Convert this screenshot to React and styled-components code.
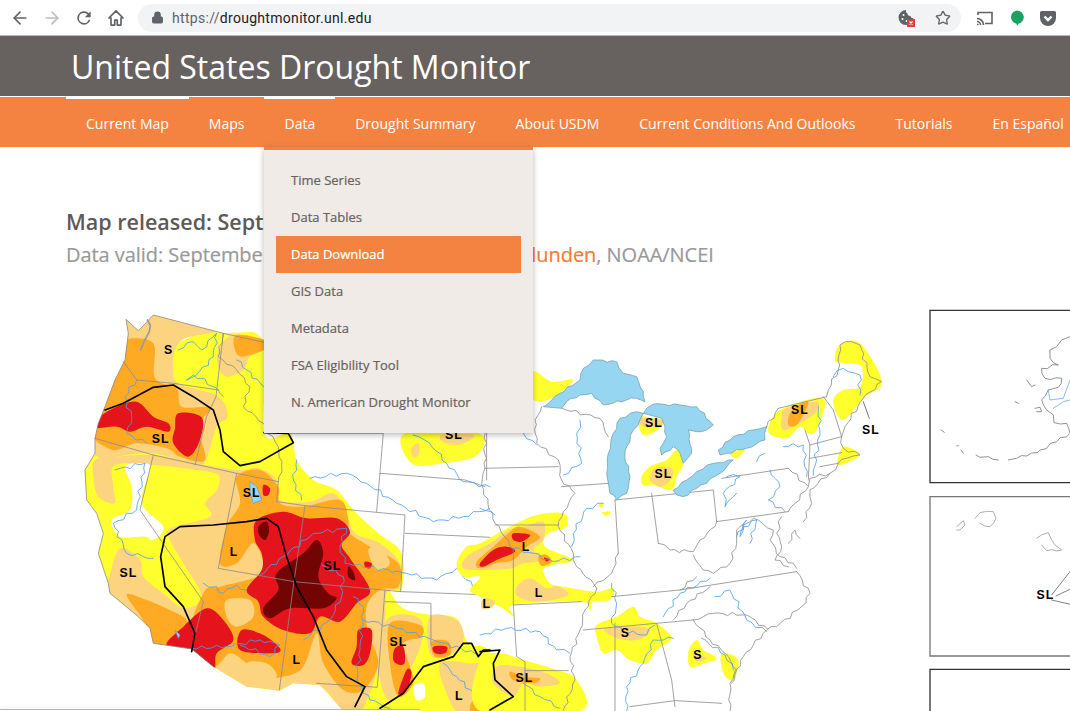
import React from 'react';
import styled, { createGlobalStyle } from 'styled-components';
import { ArrowLeft, ArrowRight, Lock, Star } from 'lucide-react';

const navItems = [
  { label: 'Current Map', marked: true },
  { label: 'Maps' },
  { label: 'Data', marked: true },
  { label: 'Drought Summary' },
  { label: 'About USDM' },
  { label: 'Current Conditions And Outlooks' },
  { label: 'Tutorials' },
  { label: 'En Español' },
];

const menuItems = ['Time Series', 'Data Tables', 'Data Download', 'GIS Data', 'Metadata', 'FSA Eligibility Tool', 'N. American Drought Monitor'];

const C = { d0: '#ffff2e', d1: '#fcd37f', d2: '#ffaa22', d3: '#e5141c', d4: '#730404', lake: '#97d6f0', river: '#4a9cf2', line: '#8a8a8a' };

// closed catmull-rom through the points, the drought areas are all soft edged
const blob = (pts) => {
  const n = pts.length;
  let d = `M${pts[0][0]} ${pts[0][1]}`;
  for (let i = 0; i < n; i++) {
    const p0 = pts[(i - 1 + n) % n], p1 = pts[i], p2 = pts[(i + 1) % n], p3 = pts[(i + 2) % n];
    d += `C${p1[0] + (p2[0] - p0[0]) / 6} ${p1[1] + (p2[1] - p0[1]) / 6} ${p2[0] - (p3[0] - p1[0]) / 6} ${p2[1] - (p3[1] - p1[1]) / 6} ${p2[0]} ${p2[1]}`;
  }
  return d + 'Z';
};

const line = (pts) => pts.map((p) => p.join(',')).join(' ');

// rivers and coasts are not straight, break the segments up a bit
const wiggle = (pts, amp = 5) => {
  const out = [];
  pts.forEach((p, i) => {
    out.push(p);
    if (i === pts.length - 1) return;
    const q = pts[i + 1];
    const len = Math.hypot(q[0] - p[0], q[1] - p[1]);
    const steps = Math.floor(len / 14);
    for (let s = 1; s < steps; s++) {
      const t = s / steps;
      const off = amp * Math.sin(s * 2.3 + p[0] * 0.7 + p[1]) * Math.sin(Math.PI * t);
      out.push([
        Math.round(p[0] + (q[0] - p[0]) * t - ((q[1] - p[1]) / len) * off),
        Math.round(p[1] + (q[1] - p[1]) * t + ((q[0] - p[0]) / len) * off),
      ]);
    }
  });
  return out;
};

// reference coords x3 from (70,300)
const westLand = [[168,58],[175,100],[165,180],[135,240],[105,320],[85,370],[75,415],[75,460],[45,510],[50,600],[80,640],[100,700],[85,760],[115,850],[120,880],[205,950],[240,985],[250,1030],[365,1047],[430,1100],[530,1160],[628,1172],[670,1150],[750,1155],[820,1233],[1260,1233],[1260,60],[460,100],[250,45],[222,75],[205,92]];

const westAreas = [
  [C.d0, [[320,130],[400,90],[460,90],[582,127],[582,398],[660,400],[680,480],[730,540],[800,570],[850,630],[925,700],[995,760],[995,870],[960,870],[1000,925],[1080,945],[1160,955],[1195,1030],[1260,1060],[1280,1250],[820,1250],[700,1250],[300,1250],[0,1000],[0,400],[100,200]]],
  [C.d1, [[150,30],[440,85],[345,115],[315,150],[310,200],[325,250],[445,290],[472,350],[440,380],[410,475],[380,495],[250,460],[140,470],[100,480],[40,420],[50,300],[120,170]]],
  [C.d1, [[445,150],[490,105],[582,120],[582,150],[540,170],[520,210],[470,230],[445,200]]],
  [C.d1, [[75,480],[140,470],[250,465],[380,490],[500,510],[565,505],[620,540],[630,600],[720,605],[790,580],[830,640],[855,700],[930,730],[990,790],[990,860],[950,880],[945,960],[925,1100],[870,1240],[820,1240],[750,1160],[630,1190],[530,1180],[250,1060],[220,990],[100,890],[118,830],[150,745],[210,780],[220,830],[280,880],[340,925],[395,890],[340,790],[300,720],[300,685],[420,650],[405,610],[440,570],[445,525],[380,510],[250,495],[135,495],[130,560],[135,610],[85,590],[70,530]]],
  ['#ffffff', [[165,500],[225,490],[240,510],[215,610],[280,680],[250,720],[225,710],[150,710],[125,660],[180,630],[185,560]]],
  [C.d0, [[1005,400],[1225,400],[1222,465],[1120,490],[1025,490]]],
  [C.d1, [[1025,445],[1045,430],[1048,462],[1030,472]]],
  [C.d1, [[1115,405],[1212,405],[1175,432],[1125,430]]],
  [C.d1, [[950,960],[1040,950],[1060,1000],[1030,1090],[960,1200],[925,1100]]],
  [C.d1, [[1080,950],[1160,960],[1180,1020],[1130,1070],[1080,1060]]],
  [C.d1, [[1110,1090],[1200,1090],[1270,1100],[1270,1240],[1170,1240],[1130,1180]]],
  ['#ffffff', [[1030,1160],[1060,1150],[1065,1190],[1040,1200]]],
  [C.d2, [[170,118],[250,130],[255,235],[320,265],[335,320],[420,325],[385,380],[405,480],[330,470],[290,445],[200,430],[130,450],[60,405],[60,350],[100,300],[140,200],[165,160]]],
  [C.d2, [[500,105],[590,122],[590,145],[520,170],[495,150]]],
  [C.d2, [[170,885],[230,900],[300,930],[350,960],[340,1000],[290,1040],[240,1040],[225,970]]],
  [C.d2, [[500,530],[570,510],[625,560],[630,610],[700,620],[810,600],[835,660],[840,700],[900,740],[985,790],[985,860],[930,870],[890,920],[895,1000],[925,1090],[880,1170],[820,1170],[760,1090],[740,1000],[700,1100],[640,1130],[580,1130],[530,1090],[480,1060],[430,1100],[350,1040],[400,880],[450,860],[560,830],[580,790],[550,730],[500,790],[450,790],[470,680],[510,610]]],
  [C.d2, [[960,970],[1050,975],[1055,1010],[1000,1030],[1020,1100],[1030,1150],[985,1190],[960,1090]]],
  [C.d2, [[1085,1025],[1135,1025],[1140,1065],[1095,1070]]],
  [C.d2, [[1210,1200],[1270,1170],[1270,1240],[1205,1240]]],
  [C.d1, [[470,900],[540,900],[550,950],[500,980],[470,950]]],
  [C.d1, [[530,1090],[590,1090],[620,1130],[560,1150]]],
  [C.d1, [[895,750],[930,745],[960,790],[920,810]]],
  [C.d3, [[70,365],[130,325],[200,305],[250,350],[295,370],[295,395],[230,380],[180,395],[140,380],[70,385]]],
  [C.d3, [[325,340],[395,352],[390,420],[355,470],[310,430],[315,385]]],
  [C.d3, [[560,660],[640,635],[710,655],[800,655],[840,695],[815,735],[840,775],[900,870],[860,910],[810,965],[750,950],[720,1000],[640,990],[580,950],[565,905],[530,870],[575,810],[575,760],[555,720]]],
  [C.d3, [[290,1035],[340,980],[410,925],[460,960],[490,1020],[440,1060],[430,1110],[360,1055]]],
  [C.d3, [[515,990],[580,1005],[630,1045],[610,1060],[510,1050]]],
  [C.d3, [[865,990],[905,990],[900,1060],[880,1095],[845,1090],[860,1040]]],
  [C.d3, [[975,1045],[1000,1040],[1005,1085],[990,1095],[970,1080]]],
  [C.d3, [[1010,1110],[1025,1120],[1010,1170],[985,1180]]],
  [C.d3, [[1090,1040],[1130,1040],[1125,1060],[1095,1060]]],
  [C.d3, [[580,555],[600,565],[595,585],[580,585]]],
  [C.d3, [[885,785],[905,790],[900,805],[885,800]]],
  [C.d4, [[565,680],[590,665],[597,695],[585,720],[568,705]]],
  [C.d4, [[620,820],[700,760],[740,720],[760,760],[745,830],[775,880],[800,895],[760,925],[660,925],[600,955],[580,925],[625,870]]],
  [C.d4, [[835,800],[850,815],[855,840],[835,830]]],
];

const westLines = [
  [[160,185],[200,240],[310,250],[445,270]],
  [[460,100],[438,290],[410,350],[375,495]],
  [[75,415],[250,465],[500,520],[625,545]],
  [[500,520],[445,805],[672,845],[628,1170]],
  [[625,545],[620,605],[705,617],[672,845]],
  [[705,617],[1005,645],[992,875],[672,845]],
  [[250,465],[210,630],[400,905],[365,1047]],
  [[660,400],[940,400],[920,635]],
  [[930,520],[1185,540],[1245,560]],
  [[1005,700],[1260,712]],
  [[992,875],[1260,885]],
  [[945,870],[922,1162],[740,1150]],
  [[945,905],[1083,910],[1083,1035]],
  [[1250,380],[1250,540]],
];

const westWavy = [
  [[460,100],[445,170],[500,210],[540,260],[520,320],[580,370],[625,440],[635,500],[625,545]],
];

const westRivers = [
  [[325,150],[370,125],[395,150],[440,100],[430,170],[380,225],[350,240]],
  [[200,240],[165,290],[185,350],[170,400],[230,430]],
  [[350,240],[370,225],[430,260],[460,290]],
  [[500,180],[530,210],[580,260]],
  [[680,480],[670,540],[695,600]],
  [[720,535],[830,520],[890,550],[980,610],[1090,665],[1180,650],[1260,625]],
  [[135,510],[225,490],[200,630],[130,670],[170,760],[250,775]],
  [[570,825],[640,770],[730,700],[830,685],[810,740],[825,790],[1010,820],[1100,840],[1160,805],[1220,870],[1260,900]],
  [[755,795],[820,830],[815,890],[780,960],[700,1020]],
  [[365,1045],[470,1040],[570,1020],[630,1035],[600,1070],[510,1035]],
  [[400,850],[440,860],[460,880],[500,855],[530,870]],
  [[880,960],[970,980],[1090,1020],[1230,1065]],
  [[850,890],[880,920],[870,1050],[860,1140],[900,1200],[960,1225]],
  [[1120,1090],[1160,1130],[1230,1200]],
  [[1030,405],[1080,430],[1130,490],[1180,545],[1260,560]],
];

const westBlack = [
  [[105,330],[160,310],[250,262],[310,255],[370,290],[430,330],[450,390],[460,455],[510,497],[570,485],[670,428],[655,400],[582,398]],
  [[365,1055],[375,1000],[340,920],[285,860],[272,770],[285,710],[330,680],[430,675],[530,665],[590,655],[625,680],[650,770],[680,860],[730,950],[770,1050],[830,1130],[885,1160],[855,1220]],
  [[930,1225],[1000,1180],[1060,1100],[1150,1070],[1180,1030],[1205,1030],[1225,1070],[1240,1050],[1260,1050]],
];

const westLabels = [['S',296,148],['SL',272,415],['SL',545,577],['L',492,756],['SL',787,796],['SL',175,818],['SL',985,1026],['L',680,1078],['L',1168,1188],['SL',1152,405]];

// reference coords x3 from (480,330)
const eastAreas = [
  [C.d0, [[0,640],[90,590],[170,555],[250,550],[260,590],[205,610],[195,650],[280,690],[220,705],[190,720],[210,760],[250,770],[350,785],[400,775],[390,810],[340,815],[330,840],[300,815],[100,825],[105,860],[60,830],[0,800],[-30,780],[0,740],[-50,740],[-70,700],[-40,650]]],
  [C.d1, [[-40,680],[30,640],[85,600],[130,590],[190,575],[190,630],[160,660],[200,690],[130,700],[95,715],[20,720],[-50,715]]],
  [C.d1, [[110,770],[150,745],[200,775],[230,768],[265,795],[180,815],[115,800]]],
  [C.d1, [[10,805],[45,815],[30,835],[5,835]]],
  [C.d2, [[85,610],[120,590],[180,620],[140,650],[100,690],[50,700],[0,715],[-10,695],[40,650]]],
  [C.d2, [[175,680],[200,675],[215,695],[185,708]]],
  [C.d3, [[100,610],[150,615],[125,635],[100,630]]],
  [C.d3, [[0,700],[40,660],[80,650],[105,665],[50,690],[10,710]]],
  [C.d3, [[192,683],[208,688],[200,695]]],
  [C.d0, [[160,125],[215,155],[280,150],[215,205],[160,208]]],
  [C.d0, [[0,990],[60,970],[130,990],[230,1020],[290,1050],[300,1143],[0,1143]]],
  [C.d1, [[50,1010],[120,1010],[200,1030],[240,1060],[180,1070],[130,1060],[100,1100],[40,1060]]],
  [C.d2, [[90,1025],[130,1040],[180,1045],[160,1060],[100,1050]]],
  [C.d0, [[350,885],[410,860],[460,830],[480,860],[530,880],[575,925],[530,960],[500,1000],[450,990],[410,960],[370,970],[350,920]]],
  [C.d1, [[375,895],[480,890],[510,905],[470,930],[410,925]]],
  [C.d0, [[625,965],[650,930],[670,960],[710,985],[660,1005],[630,1010]]],
  [C.d1, [[640,970],[680,985],[650,995]]],
  [C.d0, [[725,970],[775,990],[760,1050],[730,1030]]],
  [C.d0, [[475,260],[520,265],[550,270],[540,295],[490,315]]],
  [C.d1, [[480,265],[545,270],[540,290],[490,290]]],
  [C.d0, [[485,440],[510,410],[560,390],[590,360],[610,400],[590,440],[575,480],[520,465],[490,465]]],
  [C.d1, [[525,415],[575,415],[575,445],[545,470],[510,450]]],
  [C.d0, [[865,305],[900,240],[1030,205],[1010,300],[985,310],[960,290],[920,325]]],
  [C.d1, [[905,260],[920,235],[1010,215],[1005,250],[960,280],[910,300]]],
  [C.d2, [[930,250],[955,225],[985,215],[975,245],[950,285],[925,285]]],
  [C.d0, [[1065,90],[1080,45],[1140,40],[1205,155],[1150,205],[1100,265],[1075,260],[1060,210],[1090,180],[1140,170],[1145,110],[1095,100]]],
  [C.d0, [[1090,350],[1140,375],[1075,405]]],
  [C.d0, [[750,370],[795,358],[770,385]]],
  [C.d0, [[355,525],[370,520],[365,532]]],
  [C.d0, [[365,547],[392,545],[380,558]]],
];

const lakes = [
  [[190,230],[240,190],[300,150],[310,115],[340,90],[410,95],[430,130],[470,140],[490,185],[495,215],[470,205],[440,210],[370,225],[335,190],[300,195],[260,215],[245,235]],
  [[380,430],[385,370],[400,310],[420,265],[470,245],[490,250],[480,270],[460,300],[440,350],[435,380],[450,440],[440,490],[410,510],[390,490]],
  [[490,250],[520,222],[600,225],[650,230],[700,285],[680,300],[650,305],[625,300],[635,370],[610,400],[600,370],[580,350],[545,375],[540,355],[560,320],[555,290],[545,265]],
  [[580,480],[620,450],[650,425],[700,400],[760,390],[720,430],[650,475],[610,500],[590,495]],
  [[715,360],[760,320],[820,300],[860,290],[855,330],[800,355],[740,370],[720,375]],
];

const eastLines = [
  [[15,415],[235,410]],
  [[45,585],[235,585]],
  [[245,470],[385,460]],
  [[100,660],[100,825],[305,815]],
  [[100,825],[110,980],[135,995],[135,1143]],
  [[405,510],[415,670]],
  [[405,510],[700,480],[710,575],[925,545]],
  [[925,415],[725,445]],
  [[515,490],[535,640]],
  [[395,800],[600,780],[950,725]],
  [[310,900],[530,880],[640,870]],
  [[530,880],[575,1050],[585,1130]],
  [[405,880],[405,1143]],
  [[450,1130],[585,1112],[725,1120]],
  [[135,1022],[265,1022]],
  [[895,235],[1040,200]],
  [[990,345],[1085,320]],
  [[990,385],[1085,368]],
  [[1020,410],[1075,400]],
  [[975,300],[990,345],[985,450]],
  [[1030,200],[1060,240],[1085,320]],
];

const eastWavy = [
  [[15,310],[15,415],[5,465],[45,580],[85,630],[100,660]],
  [[185,230],[165,270],[170,340],[235,390],[245,450],[285,490],[250,545],[235,590],[280,670],[290,710],[340,760],[350,775]],
  [[245,235],[360,265],[385,320]],
  [[415,670],[395,730],[340,770]],
  [[535,640],[570,660],[640,665],[660,630],[705,590],[710,575]],
  [[640,675],[670,720],[700,730],[750,700],[770,640],[770,600],[820,565],[880,600],[870,630],[900,680],[940,700],[950,715]],
  [[950,725],[990,790],[965,830],[890,890],[860,900],[790,980],[750,1060],[750,1143]],
  [[600,780],[650,740]],
  [[580,870],[620,820],[690,770]],
  [[640,870],[700,850],[800,855],[865,900]],
  [[640,870],[690,930],[735,970],[770,1020],[755,1060]],
  [[350,775],[315,840],[300,900],[270,980],[285,1050],[250,1143]],
  [[925,415],[985,470],[925,545]],
  [[985,470],[990,445],[1050,430],[990,480],[995,520],[970,575]],
  [[895,235],[860,290]],
  [[1040,200],[1045,180],[1075,120],[1080,45],[1115,35],[1140,45],[1170,140],[1205,155],[1150,205],[1095,290],[1085,320],[1090,355],[1140,375],[1100,385],[1075,400],[1050,430]],
  [[905,560],[890,610],[905,650],[885,690],[925,710]],
  [[925,640],[945,600],[960,625]],
];

const eastRivers = [
  [[300,270],[290,310],[305,400],[250,435]],
  [[130,310],[170,345]],
  [[370,520],[320,535],[280,610],[275,650]],
  [[0,535],[45,555]],
  [[100,655],[160,670],[220,695],[300,680]],
  [[0,915],[80,895],[180,905],[230,960],[270,970]],
  [[395,760],[410,820],[395,880],[430,905],[500,915],[525,885]],
  [[580,925],[520,930],[490,1000],[440,1070],[440,1143]],
  [[690,745],[600,790],[550,860]],
  [[705,800],[750,780],[800,870],[860,905]],
  [[665,925],[735,975],[760,1020]],
  [[870,420],[900,470],[865,510],[915,545]],
  [[740,440],[780,440],[730,490],[735,530],[770,490]],
  [[910,350],[970,345],[980,440]],
  [[1060,140],[1090,115],[1140,135],[1140,195]],
  [[1015,230],[1020,300],[1000,435]],
  [[770,620],[800,570],[780,620],[790,590],[830,570],[810,640]],
  [[830,395],[855,370]],
  [[130,1060],[180,1100],[240,1135]],
];

const eastLabels = [['SL',522,278],['SL',550,430],['SL',960,238],['SL',1173,298],['L',138,650],['L',177,787],['L',20,822],['S',436,908],['S',654,975],['SL',133,1043]];

const eastBlack = [[[0,965],[60,960],[40,1000],[45,1050],[100,1100],[30,1140]]];

// reference coords x3 from (900,300)
const alaska = [
  [[510,110],[485,120],[470,140],[450,150],[450,175],[475,195],[425,205],[435,235],[485,235],[475,262],[445,270],[425,300],[440,330],[460,345],[462,368],[500,370],[510,400],[470,425],[420,450],[412,458],[380,468],[350,475],[325,480]],
  [[295,480],[265,470],[240,472],[228,465]],
  [[190,460],[183,450]],
  [[175,437],[170,438]],
  [[133,397],[123,390]],
  [[380,240],[395,260],[405,255]],
  [[345,305],[355,310]],
  [[405,325],[420,322],[425,335],[410,335]],
];

const hawaii = [
  [[225,655],[240,638],[280,635],[288,655],[270,680],[240,670]],
  [[170,680],[190,662],[195,675],[180,690],[170,690]],
  [[410,715],[445,698],[465,735],[485,750],[440,752],[425,735]],
];

const leaders = [[[455,885],[510,815]],[[468,888],[510,868]],[[455,900],[510,913]]];

const Labels = ({ data }) => data.map(([t, x, y]) => (
  <MapLabel key={t + x} x={x} y={y + 13}>{t}</MapLabel>
));

const Lines = ({ data, color, width, wavy }) => data.map((pts, i) => (
  <polyline key={i} points={line(wavy ? wiggle(pts, wavy) : pts)} fill="none" stroke={color} strokeWidth={width} strokeLinejoin="round" strokeLinecap="round" />
));

const DroughtMap = () => (
  <MapSvg viewBox="0 0 1070 411">
    <defs>
      <clipPath id="west-land"><polygon points={line(westLand)} /></clipPath>
    </defs>
    <g transform="translate(70 0) scale(.3333)">
      <g clipPath="url(#west-land)">
        {westAreas.map(([fill, pts], i) => <path key={i} d={blob(pts)} fill={fill} />)}
      </g>
      <polyline points={line(westLand.slice(0, 20))} fill="none" stroke={C.line} strokeWidth="2.4" />
      <polyline points={line([[168,58],[205,92],[222,75],[250,45],[460,100],[582,127]])} fill="none" stroke={C.line} strokeWidth="2.4" />
      <Lines data={westLines} color={C.line} width={2.4} />
      <Lines data={westWavy} color={C.line} width={2.4} wavy={5} />
      <Lines data={westRivers} color={C.river} width={2.4} wavy={7} />
      <path d="M540 545L560 560L575 600L550 610L540 580Z" fill={C.lake} stroke={C.river} strokeWidth="2" />
      <path d="M315 990L330 1005L325 1015Z" fill={C.lake} stroke={C.river} strokeWidth="2" />
      <Lines data={[[[232,60],[238,95],[222,125],[212,150]]]} color="#999" width={5} wavy={6} />
      <Lines data={westBlack} color="#000" width={5} />
      <Labels data={westLabels} />
    </g>
    <g transform="translate(480 30) scale(.3333)">
      {eastAreas.map(([fill, pts], i) => <path key={i} d={blob(pts)} fill={fill} />)}
      <Lines data={eastLines} color={C.line} width={2.4} />
      <Lines data={eastWavy} color={C.line} width={2.4} wavy={6} />
      <Lines data={eastRivers} color={C.river} width={2.4} wavy={7} />
      {lakes.map((pts, i) => <polygon key={i} points={line(wiggle(pts, 4))} fill={C.lake} stroke="#6a93a8" strokeWidth="2" />)}
      <Lines data={eastBlack} color="#000" width={5} />
      <Lines data={[[[1150,215],[1168,265]]]} color="#000" width={1.6} />
      <Labels data={eastLabels} />
    </g>
    <g transform="translate(900 0) scale(.3333)">
      <path d="M510 31H90V548H510" fill="none" stroke="#333" strokeWidth="4" />
      <path d="M510 590H90V1068H510" fill="none" stroke="#777" strokeWidth="4" />
      <path d="M510 1108H90V1240" fill="none" stroke="#333" strokeWidth="4" />
      <Lines data={alaska} color="#777" width={2.4} wavy={5} />
      <Lines data={[[[445,270],[450,300],[490,295],[510,240]],[[460,325],[490,305],[510,300]]]} color={C.river} width={2} />
      <Lines data={hawaii} color="#999" width={2.4} wavy={3} />
      <Lines data={leaders} color="#111" width={1.6} />
      <MapLabel x={436} y={896}>SL</MapLabel>
    </g>
  </MapSvg>
);

const App = () => (
  <Page>
    <GlobalStyle />
    <Toolbar>
      <ToolIcon><ArrowLeft size={20} color="#5f6368" strokeWidth={2} /></ToolIcon>
      <ToolIcon><ArrowRight size={20} color="#bdbdbd" strokeWidth={2} /></ToolIcon>
      <ToolIcon>
        <svg width="20" height="20" viewBox="0 0 24 24" fill="#5f6368">
          <path d="M17.650 6.350A8 8 0 1 0 19.730 14h-2.080A6 6 0 1 1 12 6c1.660 0 3.140.690 4.220 1.780L13 11h7V4z" />
        </svg>
      </ToolIcon>
      <ToolIcon>
        <svg width="20" height="20" viewBox="0 0 24 24" fill="none" stroke="#5f6368" strokeWidth="2">
          <path d="M12 3.500L3.500 12H6v8.500h4.500v-6h3v6H18V12h2.500z" strokeLinejoin="round" />
        </svg>
      </ToolIcon>
      <UrlPill>
        <Lock size={13} color="#5f6368" fill="#5f6368" strokeWidth={2} />
        <UrlText><UrlScheme>https://</UrlScheme>droughtmonitor.unl.edu</UrlText>
        <PillIcons>
          <svg width="20" height="20" viewBox="0 0 20 20">
            <path d="M9 2a7.500 7.500 0 1 0 7.500 8c-1.500.5-3-.5-3-2-1.800.2-3-1-3-2.500C9.200 5.300 8.800 3.500 9 2z" fill="#5f6368" />
            <circle cx="6.500" cy="7" r="1" fill="#fff" /><circle cx="5.500" cy="11" r="1" fill="#fff" /><circle cx="9.500" cy="13" r="1" fill="#fff" />
            <rect x="10" y="11" width="8" height="8" fill="#db3f3f" />
            <path d="M12.500 13.500l3 3m0-3l-3 3" stroke="#fff" strokeWidth="1.200" />
          </svg>
          <Star size={16} color="#5f6368" strokeWidth={2} />
        </PillIcons>
      </UrlPill>
      <ExtIcons>
        <svg width="20" height="20" viewBox="0 0 20 20" fill="none" stroke="#5f6368" strokeWidth="1.600">
          <path d="M3 7V4.500h14v11h-7" />
          <path d="M2 16.500h1.500M2 13.500a3.500 3.500 0 0 1 3.500 3.500M2 10.500a6.500 6.500 0 0 1 6.500 6.500" />
        </svg>
        <svg width="16" height="20" viewBox="0 0 16 20">
          <path d="M8 2.500a6.700 6.700 0 0 1 1.500 13.250L8 18l-.5-2.250A6.700 6.700 0 0 1 8 2.500z" fill="#16a45f" />
        </svg>
        <svg width="18" height="18" viewBox="0 0 18 18">
          <path d="M1 3.500A1.500 1.500 0 0 1 2.500 2h13A1.500 1.500 0 0 1 17 3.500V9a8 8 0 0 1-16 0z" fill="#5f6368" />
          <path d="M5.500 7.500L9 11l3.500-3.500" fill="none" stroke="#fff" strokeWidth="2.400" />
        </svg>
      </ExtIcons>
    </Toolbar>
    <Header><Title>United States Drought Monitor</Title></Header>
    <Nav>
      {navItems.map((item) => <NavItem key={item.label} $marked={item.marked}>{item.label}</NavItem>)}
      <Menu>
        {menuItems.map((m) => <MenuItem key={m} $active={m === 'Data Download'}>{m}</MenuItem>)}
      </Menu>
    </Nav>
    <Main>
      <Released>Map released: September 13, 2018</Released>
      <Valid>Data valid: September 11, 2018 | Author: <AuthorLink>Dan Hedlunden</AuthorLink>, NOAA/NCEI</Valid>
      <DroughtMap />
    </Main>
    <StatusEdge />
  </Page>
);

export default App;

const GlobalStyle = createGlobalStyle`
  html, body { margin: 0; padding: 0; background: #fff; overflow: hidden; }
  body { font-family: "Open Sans", "Liberation Sans", sans-serif; }
`;

const Page = styled.div`
  width: 1070px;
  height: 711px;
  overflow: hidden;
  position: relative;
`;

const Toolbar = styled.div`
  height: 35px;
  background: #fff;
  border-bottom: 1px solid #b8b8b8;
  display: flex;
  align-items: center;
  padding-left: 4px;
`;

const ToolIcon = styled.div`
  width: 32px;
  display: flex;
  justify-content: center;
`;

const UrlPill = styled.div`
  width: 823px;
  height: 28px;
  margin-left: 6px;
  border-radius: 14px;
  background: #f1f3f4;
  display: flex;
  align-items: center;
  padding: 0 10px 0 13px;
  box-sizing: border-box;
`;

const UrlText = styled.span`
  margin-left: 8px;
  font: 14px Roboto, sans-serif;
  color: #202124;
  letter-spacing: .3px;
`;

const UrlScheme = styled.span`
  color: #5f6368;
`;

const PillIcons = styled.div`
  margin-left: auto;
  display: flex;
  align-items: center;
  gap: 18px;
`;

const ExtIcons = styled.div`
  display: flex;
  align-items: center;
  gap: 14px;
  margin-left: 14px;
`;

const Header = styled.header`
  height: 60px;
  background: #676260;
  border-bottom: 1px solid #fff;
  padding-left: 71px;
  display: flex;
  align-items: center;
`;

const Title = styled.h1`
  margin: 0;
  font: 400 32px "Open Sans", sans-serif;
  color: #fff;
`;

const Nav = styled.nav`
  position: relative;
  height: 50px;
  background: #f48342;
  display: flex;
  padding-left: 66px;
`;

const NavItem = styled.a`
  padding: 0 20px;
  line-height: 54px;
  font-size: 14px;
  color: #fff;
  white-space: nowrap;
  box-shadow: ${(p) => (p.$marked ? 'inset 0 2px 0 #fff' : 'none')};
`;

const Menu = styled.div`
  position: absolute;
  z-index: 2;
  left: 264px;
  top: 50px;
  width: 269px;
  height: 286px;
  padding: 12px;
  box-sizing: border-box;
  background: #f0ebe7;
  border-top: 3px solid #f48342;
  box-shadow: 0 2px 6px rgba(0, 0, 0, .28);
`;

const MenuItem = styled.div`
  height: 37px;
  line-height: 37px;
  padding-left: 15px;
  font-size: 13px;
  -webkit-text-stroke: .2px;
  color: ${(p) => (p.$active ? '#fff' : '#676260')};
  background: ${(p) => (p.$active ? '#f48342' : 'transparent')};
`;

const Main = styled.main`
  padding-top: 60px;
`;

const Released = styled.div`
  margin-left: 66px;
  font-size: 21.5px;
  line-height: 30px;
  font-weight: 600;
  color: #5e5a58;
  white-space: nowrap;
`;

const Valid = styled.div`
  margin: 3px 0 0 66px;
  font-size: 20px;
  line-height: 30px;
  letter-spacing: -.05px;
  -webkit-text-stroke: .2px;
  color: #999;
  white-space: nowrap;
`;

const AuthorLink = styled.span`
  color: #f47a36;
`;

const MapSvg = styled.svg`
  display: block;
  width: 1070px;
  height: 411px;
  margin-top: 30px;
`;

const MapLabel = styled.text`
  font: bold 37px "Liberation Sans", sans-serif;
  letter-spacing: 3px;
  text-anchor: middle;
  fill: #000;
`;

const StatusEdge = styled.div`
  position: absolute;
  left: 0;
  bottom: 0;
  width: 420px;
  height: 1px;
  background: #fff;
  border-top: 1px solid #b5b5b5;
  box-shadow: 0 -2px 4px rgba(0, 0, 0, .08);
`;
